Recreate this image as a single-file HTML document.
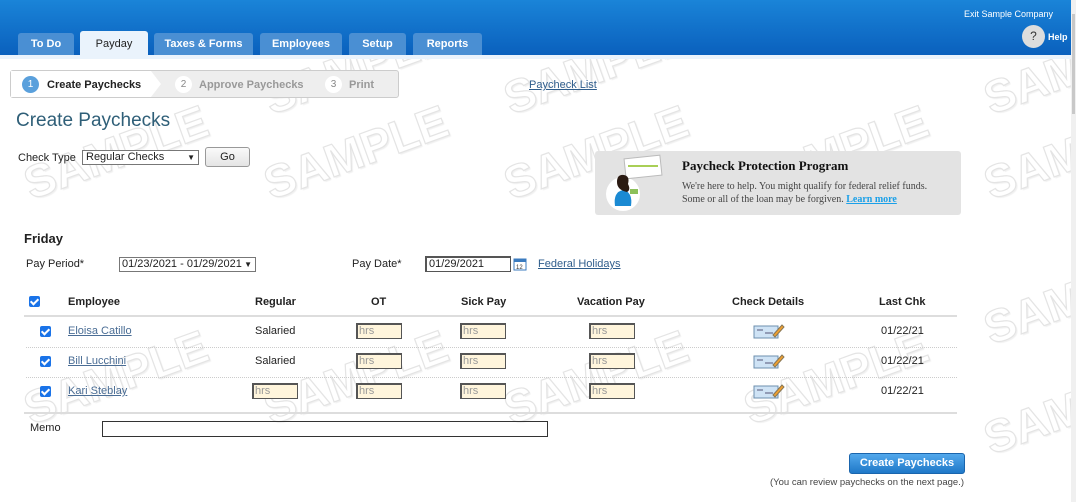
<!DOCTYPE html>
<html><head><meta charset="utf-8"><style>
*{box-sizing:border-box}
body{margin:0;width:1076px;height:502px;overflow:hidden;background:#fff;font-family:"Liberation Sans",Arial,sans-serif;font-size:11px;line-height:14px;color:#222;position:relative}
.a{position:absolute}
.hdr{left:0;top:0;width:1071px;height:55px;background:linear-gradient(#1a84d8,#0a60bd)}
.hdr2{left:0;top:55px;width:1071px;height:4px;background:#eaf3fc}
.tab{top:33px;height:22px;background:#4a8fd3;color:#fff;font-weight:bold;font-size:11px;text-align:center;line-height:23px;border-radius:3px 3px 0 0}
.tab.on{background:#eaf3fc;color:#222;font-weight:normal;top:31px;height:24px;line-height:26px}
.wm{font-size:46px;font-weight:bold;transform:rotate(-20deg);-webkit-text-stroke:1.2px #e4e4e4;color:#fff;white-space:nowrap;text-shadow:1px 2px 1px #f0f0f0}
.lnk{color:#2f5d8c;text-decoration:underline}
.hrs{width:46px;height:16px;border:1px solid #555;border-width:2px 1px 1px 2px;background:#fff5dc;color:#999;font-size:11px;line-height:13px;padding-left:1px}
.cb{width:11px;height:11px;background:#1a73e8;border-radius:2px}
.cb:after{content:"";position:absolute;left:3px;top:1px;width:3px;height:6px;border:solid #fff;border-width:0 2px 2px 0;transform:rotate(45deg)}
.th{font-weight:bold;font-size:11px;top:295px}
.sep{height:1px;left:26px;width:931px;border-top:1px dotted #ccc}
</style></head><body>
<div class="a wm" style="left:20px;top:145px">SAMPLE</div>
<div class="a wm" style="left:260px;top:145px">SAMPLE</div>
<div class="a wm" style="left:500px;top:145px">SAMPLE</div>
<div class="a wm" style="left:740px;top:145px">SAMPLE</div>
<div class="a wm" style="left:980px;top:145px">SAMPLE</div>
<div class="a wm" style="left:20px;top:370px">SAMPLE</div>
<div class="a wm" style="left:260px;top:370px">SAMPLE</div>
<div class="a wm" style="left:500px;top:370px">SAMPLE</div>
<div class="a wm" style="left:740px;top:370px">SAMPLE</div>
<div class="a wm" style="left:980px;top:290px">SAMPLE</div>
<div class="a wm" style="left:980px;top:400px">SAMPLE</div>
<div class="a wm" style="left:500px;top:60px">SAMPLE</div>
<div class="a wm" style="left:260px;top:60px">SAMPLE</div>
<div class="a wm" style="left:980px;top:60px">SAMPLE</div>

<div class="a hdr"></div><div class="a hdr2"></div>
<div class="a" style="left:1071px;top:0;width:5px;height:502px;background:#f0f0f0"></div>
<div class="a" style="left:1072px;top:14px;width:3px;height:100px;background:#c8c8c8"></div>
<div class="a tab" style="left:18px;width:56px">To Do</div>
<div class="a tab on" style="left:80px;width:68px">Payday</div>
<div class="a tab" style="left:154px;width:99px">Taxes &amp; Forms</div>
<div class="a tab" style="left:260px;width:82px">Employees</div>
<div class="a tab" style="left:349px;width:57px">Setup</div>
<div class="a tab" style="left:413px;width:69px">Reports</div>
<div class="a" style="left:964px;top:7px;color:#fff;font-size:9px">Exit Sample Company</div>
<div class="a" style="left:1022px;top:25px;width:23px;height:23px;border-radius:50%;background:#ddd;color:#333;text-align:center;line-height:23px;font-size:12px">?</div>
<div class="a" style="left:1048px;top:30px;color:#fff;font-size:9px;font-weight:bold">Help</div>

<div class="a" style="left:10px;top:70px;width:389px;height:28px;border:1px solid #ccc;border-radius:3px;background:#eee"></div>
<div class="a" style="left:11px;top:71px;width:140px;height:26px;background:#fff"></div>
<div class="a" style="left:151px;top:71px;width:0;height:0;border-left:10px solid #fff;border-top:13px solid transparent;border-bottom:13px solid transparent"></div>
<div class="a" style="left:22px;top:76px;width:17px;height:17px;border-radius:50%;background:#5aa0dc;color:#fff;text-align:center;line-height:17px;font-size:10px">1</div>
<div class="a" style="left:47px;top:78px;font-weight:bold;font-size:11px;color:#222">Create Paychecks</div>
<div class="a" style="left:175px;top:76px;width:17px;height:17px;border-radius:50%;background:#fff;color:#888;text-align:center;line-height:17px;font-size:10px">2</div>
<div class="a" style="left:199px;top:78px;font-weight:bold;font-size:11px;color:#999">Approve Paychecks</div>
<div class="a" style="left:325px;top:76px;width:17px;height:17px;border-radius:50%;background:#fff;color:#888;text-align:center;line-height:17px;font-size:10px">3</div>
<div class="a" style="left:349px;top:78px;font-weight:bold;font-size:11px;color:#999">Print</div>
<div class="a lnk" style="left:529px;top:78px">Paycheck List</div>

<div class="a" style="left:16px;top:110px;font-size:19px;line-height:22px;color:#2f5f78">Create Paychecks</div>
<div class="a" style="left:18px;top:151px">Check Type</div>
<div class="a" style="left:82px;top:150px;width:117px;height:15px;border:1px solid #777;font-size:11px;line-height:13px;padding-left:3px;background:#fff">Regular Checks<span style="position:absolute;right:3px;font-size:8px">&#9660;</span></div>
<div class="a" style="left:205px;top:147px;width:45px;height:20px;border:1px solid #999;border-radius:3px;background:linear-gradient(#fafafa,#e4e4e4);text-align:center;line-height:18px">Go</div>

<div class="a" style="left:595px;top:151px;width:366px;height:64px;background:#e3e3e3;border-radius:3px"></div>
<svg class="a" style="left:603px;top:154px" width="60" height="58" viewBox="0 0 60 58"><circle cx="20" cy="40" r="17" fill="#fff"/><rect x="22" y="3" width="36" height="20" fill="#fff" stroke="#bbb" transform="rotate(-6 40 13)"/><rect x="25" y="11" width="30" height="2" fill="#a9cf56"/><path d="M12 52 Q10 38 20 36 Q30 38 28 52Z" fill="#1b8ad3"/><circle cx="20" cy="28" r="5" fill="#f0c8a0"/><path d="M14 28 Q14 20 21 21 Q27 22 25 30 Q28 36 24 38 Q14 36 14 28Z" fill="#2a1a12"/><rect x="27" y="35" width="8" height="5" fill="#8cc05a"/></svg>
<div class="a" style="left:682px;top:159px;font-family:'Liberation Serif',serif;font-weight:bold;font-size:13px;color:#111">Paycheck Protection Program</div>
<div class="a" style="left:682px;top:180px;font-family:'Liberation Serif',serif;font-size:10px;color:#444;line-height:13px">We're here to help. You might qualify for federal relief funds.<br>Some or all of the loan may be forgiven. <span style="color:#1aa0e8;font-weight:bold;text-decoration:underline">Learn more</span></div>

<div class="a" style="left:24px;top:231px;font-weight:bold;font-size:13px;line-height:16px">Friday</div>
<div class="a" style="left:26px;top:257px">Pay Period*</div>
<div class="a" style="left:119px;top:257px;width:137px;height:15px;border:1px solid #777;line-height:13px;padding-left:2px;font-size:11px">01/23/2021 - 01/29/2021<span style="position:absolute;right:3px;font-size:8px">&#9660;</span></div>
<div class="a" style="left:352px;top:257px">Pay Date*</div>
<div class="a" style="left:425px;top:256px;width:86px;height:16px;border:1px solid #555;border-width:2px 1px 1px 2px;line-height:12px;padding-left:2px">01/29/2021</div>
<svg class="a" style="left:513px;top:257px" width="14" height="14"><rect x="1" y="2" width="12" height="11" fill="#fff" stroke="#3b7bbf"/><rect x="1" y="2" width="12" height="3" fill="#3b7bbf"/><text x="3" y="12" font-size="6" fill="#333" font-family="Liberation Sans">12</text></svg>
<div class="a lnk" style="left:538px;top:257px">Federal Holidays</div>

<div class="a cb" style="left:29px;top:296px"></div>
<div class="a th" style="left:68px">Employee</div>
<div class="a th" style="left:255px">Regular</div>
<div class="a th" style="left:371px">OT</div>
<div class="a th" style="left:461px">Sick Pay</div>
<div class="a th" style="left:577px">Vacation Pay</div>
<div class="a th" style="left:732px">Check Details</div>
<div class="a th" style="left:879px">Last Chk</div>
<div class="a" style="left:24px;top:315px;width:933px;height:2px;background:#ddd"></div>

<div class="a cb" style="left:40px;top:326px"></div>
<div class="a lnk" style="left:68px;top:324px;color:#4a6d95">Eloisa Catillo</div>
<div class="a" style="left:255px;top:324px">Salaried</div>
<div class="a hrs" style="left:356px;top:323px">hrs</div>
<div class="a hrs" style="left:460px;top:323px">hrs</div>
<div class="a hrs" style="left:589px;top:323px">hrs</div>
<div class="a" style="left:881px;top:324px">01/22/21</div>
<div class="a sep" style="top:347px"></div>

<div class="a cb" style="left:40px;top:356px"></div>
<div class="a lnk" style="left:68px;top:354px;color:#4a6d95">Bill Lucchini</div>
<div class="a" style="left:255px;top:354px">Salaried</div>
<div class="a hrs" style="left:356px;top:353px">hrs</div>
<div class="a hrs" style="left:460px;top:353px">hrs</div>
<div class="a hrs" style="left:589px;top:353px">hrs</div>
<div class="a" style="left:881px;top:354px">01/22/21</div>
<div class="a sep" style="top:377px"></div>

<div class="a cb" style="left:40px;top:386px"></div>
<div class="a lnk" style="left:68px;top:384px;color:#4a6d95">Kari Steblay</div>
<div class="a hrs" style="left:252px;top:383px">hrs</div>
<div class="a hrs" style="left:356px;top:383px">hrs</div>
<div class="a hrs" style="left:460px;top:383px">hrs</div>
<div class="a hrs" style="left:589px;top:383px">hrs</div>
<div class="a" style="left:881px;top:384px">01/22/21</div>
<div class="a" style="left:24px;top:412px;width:933px;height:2px;background:#ddd"></div>

<svg class="a" style="left:753px;top:322px" width="32" height="18"><rect x="1" y="4" width="24" height="12" fill="#cfe3f5" stroke="#6c8fae"/><line x1="4" y1="8" x2="10" y2="8" stroke="#557"/><line x1="12" y1="11" x2="20" y2="11" stroke="#557"/><path d="M20 13 L29 3 L31 5 L22 15Z" fill="#f0a030" stroke="#875"/></svg>
<svg class="a" style="left:753px;top:352px" width="32" height="18"><rect x="1" y="4" width="24" height="12" fill="#cfe3f5" stroke="#6c8fae"/><line x1="4" y1="8" x2="10" y2="8" stroke="#557"/><line x1="12" y1="11" x2="20" y2="11" stroke="#557"/><path d="M20 13 L29 3 L31 5 L22 15Z" fill="#f0a030" stroke="#875"/></svg>
<svg class="a" style="left:753px;top:382px" width="32" height="18"><rect x="1" y="4" width="24" height="12" fill="#cfe3f5" stroke="#6c8fae"/><line x1="4" y1="8" x2="10" y2="8" stroke="#557"/><line x1="12" y1="11" x2="20" y2="11" stroke="#557"/><path d="M20 13 L29 3 L31 5 L22 15Z" fill="#f0a030" stroke="#875"/></svg>

<div class="a" style="left:30px;top:421px">Memo</div>
<div class="a" style="left:102px;top:421px;width:446px;height:16px;border:1px solid #333"></div>

<div class="a" style="left:849px;top:453px;width:116px;height:21px;border-radius:3px;background:linear-gradient(#52a8ec,#1f78c8);border:1px solid #1a65ad;color:#fff;font-weight:bold;text-align:center;line-height:19px">Create Paychecks</div>
<div class="a" style="left:770px;top:476px;font-size:9.5px;color:#444">(You can review paychecks on the next page.)</div>
</body></html>
